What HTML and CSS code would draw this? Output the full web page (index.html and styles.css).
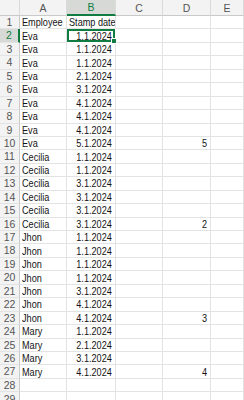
FILE: index.html
```html
<!DOCTYPE html>
<html>
<head>
<meta charset="utf-8">
<link rel="stylesheet" href="styles.css">
</head>
<body>
<div class="sheet">
  <div class="ch corner"></div><div class="ch">A</div><div class="ch sel">B</div><div class="ch">C</div><div class="ch">D</div><div class="ch">E</div>

  <div class="rh">1</div><div class="c"><span>Employee</span></div><div class="c"><span>Stamp date</span></div><div class="c"></div><div class="c"></div><div class="c"></div>
  <div class="rh sel">2</div><div class="c"><span>Eva</span></div><div class="c n active"><span>1.1.2024</span></div><div class="c"></div><div class="c"></div><div class="c"></div>
  <div class="rh">3</div><div class="c"><span>Eva</span></div><div class="c n"><span>1.1.2024</span></div><div class="c"></div><div class="c"></div><div class="c"></div>
  <div class="rh">4</div><div class="c"><span>Eva</span></div><div class="c n"><span>1.1.2024</span></div><div class="c"></div><div class="c"></div><div class="c"></div>
  <div class="rh">5</div><div class="c"><span>Eva</span></div><div class="c n"><span>2.1.2024</span></div><div class="c"></div><div class="c"></div><div class="c"></div>
  <div class="rh">6</div><div class="c"><span>Eva</span></div><div class="c n"><span>3.1.2024</span></div><div class="c"></div><div class="c"></div><div class="c"></div>
  <div class="rh">7</div><div class="c"><span>Eva</span></div><div class="c n"><span>4.1.2024</span></div><div class="c"></div><div class="c"></div><div class="c"></div>
  <div class="rh">8</div><div class="c"><span>Eva</span></div><div class="c n"><span>4.1.2024</span></div><div class="c"></div><div class="c"></div><div class="c"></div>
  <div class="rh">9</div><div class="c"><span>Eva</span></div><div class="c n"><span>4.1.2024</span></div><div class="c"></div><div class="c"></div><div class="c"></div>
  <div class="rh">10</div><div class="c"><span>Eva</span></div><div class="c n"><span>5.1.2024</span></div><div class="c"></div><div class="c n"><span>5</span></div><div class="c"></div>
  <div class="rh">11</div><div class="c"><span>Cecilia</span></div><div class="c n"><span>1.1.2024</span></div><div class="c"></div><div class="c"></div><div class="c"></div>
  <div class="rh">12</div><div class="c"><span>Cecilia</span></div><div class="c n"><span>1.1.2024</span></div><div class="c"></div><div class="c"></div><div class="c"></div>
  <div class="rh">13</div><div class="c"><span>Cecilia</span></div><div class="c n"><span>3.1.2024</span></div><div class="c"></div><div class="c"></div><div class="c"></div>
  <div class="rh">14</div><div class="c"><span>Cecilia</span></div><div class="c n"><span>3.1.2024</span></div><div class="c"></div><div class="c"></div><div class="c"></div>
  <div class="rh">15</div><div class="c"><span>Cecilia</span></div><div class="c n"><span>3.1.2024</span></div><div class="c"></div><div class="c"></div><div class="c"></div>
  <div class="rh">16</div><div class="c"><span>Cecilia</span></div><div class="c n"><span>3.1.2024</span></div><div class="c"></div><div class="c n"><span>2</span></div><div class="c"></div>
  <div class="rh">17</div><div class="c"><span>Jhon</span></div><div class="c n"><span>1.1.2024</span></div><div class="c"></div><div class="c"></div><div class="c"></div>
  <div class="rh">18</div><div class="c"><span>Jhon</span></div><div class="c n"><span>1.1.2024</span></div><div class="c"></div><div class="c"></div><div class="c"></div>
  <div class="rh">19</div><div class="c"><span>Jhon</span></div><div class="c n"><span>1.1.2024</span></div><div class="c"></div><div class="c"></div><div class="c"></div>
  <div class="rh">20</div><div class="c"><span>Jhon</span></div><div class="c n"><span>1.1.2024</span></div><div class="c"></div><div class="c"></div><div class="c"></div>
  <div class="rh">21</div><div class="c"><span>Jhon</span></div><div class="c n"><span>3.1.2024</span></div><div class="c"></div><div class="c"></div><div class="c"></div>
  <div class="rh">22</div><div class="c"><span>Jhon</span></div><div class="c n"><span>4.1.2024</span></div><div class="c"></div><div class="c"></div><div class="c"></div>
  <div class="rh">23</div><div class="c"><span>Jhon</span></div><div class="c n"><span>4.1.2024</span></div><div class="c"></div><div class="c n"><span>3</span></div><div class="c"></div>
  <div class="rh">24</div><div class="c"><span>Mary</span></div><div class="c n"><span>1.1.2024</span></div><div class="c"></div><div class="c"></div><div class="c"></div>
  <div class="rh">25</div><div class="c"><span>Mary</span></div><div class="c n"><span>2.1.2024</span></div><div class="c"></div><div class="c"></div><div class="c"></div>
  <div class="rh">26</div><div class="c"><span>Mary</span></div><div class="c n"><span>3.1.2024</span></div><div class="c"></div><div class="c"></div><div class="c"></div>
  <div class="rh">27</div><div class="c"><span>Mary</span></div><div class="c n"><span>4.1.2024</span></div><div class="c"></div><div class="c n"><span>4</span></div><div class="c"></div>
  <div class="rh">28</div><div class="c"></div><div class="c"></div><div class="c"></div><div class="c"></div><div class="c"></div>
  <div class="rh last">29</div><div class="c"></div><div class="c"></div><div class="c"></div><div class="c"></div><div class="c"></div>
</div>
</body>
</html>
```

FILE: styles.css
```css
html, body {
  margin: 0;
  padding: 0;
  background: #ffffff;
  overflow: hidden;
}

.sheet {
  display: grid;
  grid-template-columns: 20px 47px 49px 47px 48px 1fr;
  grid-template-rows: 16px;
  grid-auto-rows: 13.45px;
  font-family: "Liberation Sans", Arial, sans-serif;
  font-size: 11px;
  color: #141414;
  width: 244px;
  height: 400px;
  overflow: hidden;
}

.ch {
  background: #f3f3f3;
  color: #555555;
  text-align: center;
  font-size: 10.5px;
  line-height: 16px;
  border-right: 1px solid #dadada;
  border-bottom: 1px solid #cacaca;
  box-sizing: border-box;
}

.ch.sel {
  background: #d6d9d6;
  color: #107c41;
  border-bottom: 2px solid #107c41;
  line-height: 15px;
}

.rh {
  background: #f3f3f3;
  color: #555555;
  text-align: center;
  font-size: 10.5px;
  border-right: 1px solid #cacaca;
  border-bottom: 1px solid #e3e3e3;
  box-sizing: border-box;
  line-height: 13px;
  white-space: nowrap;
}

.rh.last {
  line-height: 14px;
}

.rh.sel {
  background: #d6d9d6;
  color: #107c41;
  border-right: 2px solid #107c41;
}

.c {
  display: flex;
  align-items: center;
  justify-content: flex-start;
  border-right: 1px solid #e3e3e3;
  border-bottom: 1px solid #e3e3e3;
  box-sizing: border-box;
  padding: 0 2px 0 2px;
  white-space: nowrap;
  overflow: hidden;
}

.c span {
  display: inline-block;
  flex-shrink: 0;
  line-height: 12px;
  transform: scaleX(0.83);
  transform-origin: left center;
}

.c.n {
  justify-content: flex-end;
  padding-right: 3px;
}

.c.n span {
  transform-origin: right center;
}

.c.active {
  position: relative;
  overflow: visible;
  box-shadow: inset 0 0 0 2px #107c41;
  border-color: transparent;
}

.c.active::after {
  content: "";
  position: absolute;
  right: -2px;
  bottom: -2px;
  width: 4px;
  height: 4px;
  background: #107c41;
  border: 1px solid #ffffff;
}
```
